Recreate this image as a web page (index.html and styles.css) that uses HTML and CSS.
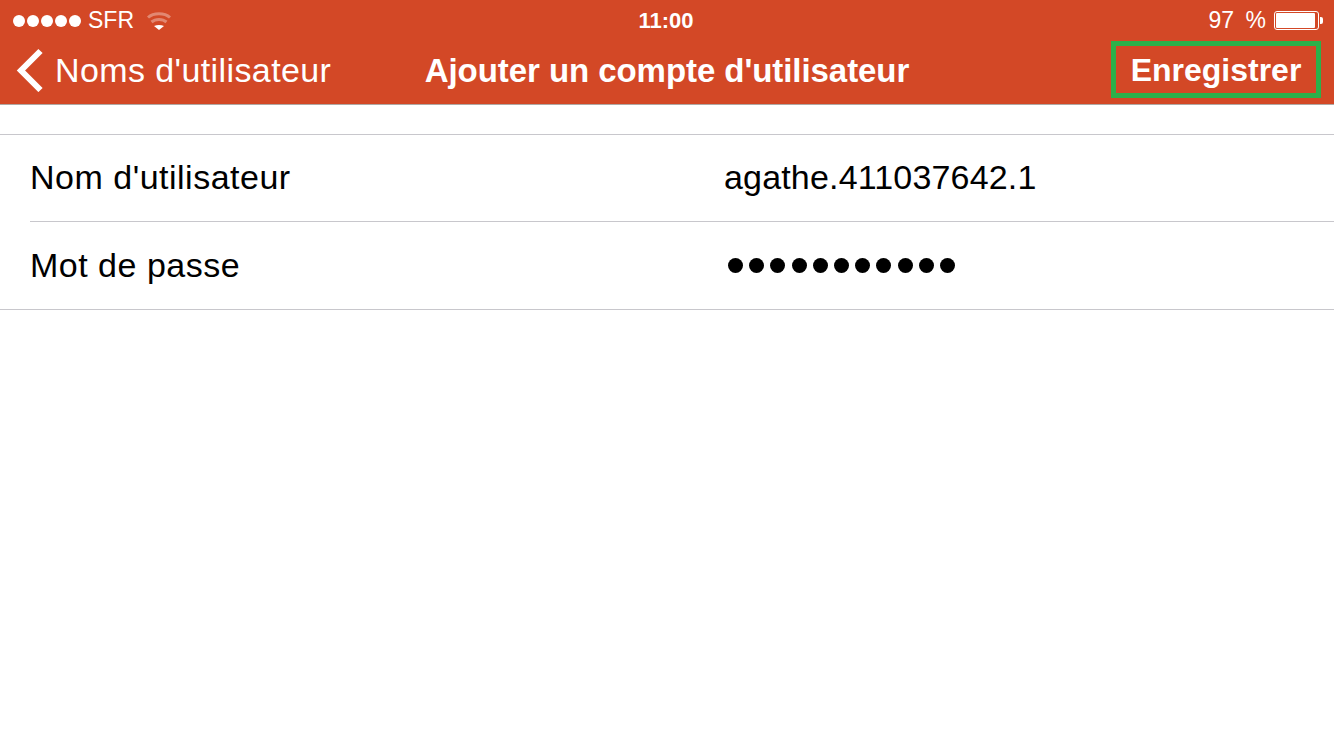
FILE: index.html
```html
<!DOCTYPE html>
<html lang="fr">
<head>
  <meta charset="UTF-8" />
  <title>Ajouter un compte d'utilisateur</title>
  <link rel="stylesheet" href="styles.css">
</head>
<body>
  <div id="header">
    <!-- Status bar -->
    <div class="status-bar">
      <div class="status-left">
        <div class="signal">
          <span class="dot"></span><span class="dot"></span><span class="dot"></span><span class="dot"></span><span class="dot"></span>
        </div>
        <span class="carrier">SFR</span>
        <svg class="wifi" width="24" height="18" viewBox="0 0 24 18">
          <path d="M1 5.500C6.500 0.500 17.500 0.500 23 5.500" fill="none" stroke="#fff" stroke-opacity="0.35" stroke-width="3"/>
          <path d="M4.500 10C8.500 6.500 15.500 6.500 19.500 10" fill="none" stroke="#fff" stroke-opacity="0.35" stroke-width="3"/>
          <path d="M7 14C10 12.500 14 12.500 17 14L12 18Z" fill="#fff"/>
        </svg>
      </div>
      <div class="clock">11:00</div>
      <div class="status-right">
        <span class="percent">97 %</span>
        <div class="battery"><div class="battery-level"></div></div>
        <div class="battery-tip"></div>
      </div>
    </div>

    <!-- Nav bar -->
    <div class="nav-bar">
      <div class="nav-back">
        <svg class="chevron" width="30" height="44" viewBox="0 0 30 44">
          <path d="M25.500 3L6 22.500L25.500 42" fill="none" stroke="#fff" stroke-width="6"/>
        </svg>
        <span>Noms d'utilisateur</span>
      </div>
      <div class="nav-title">Ajouter un compte d'utilisateur</div>
      <div class="nav-action"><span class="save-btn">Enregistrer</span></div>
    </div>
  </div>

  <div id="form">
    <div class="row">
      <div class="row-label">Nom d'utilisateur</div>
      <div class="row-value">agathe.411037642.1</div>
    </div>
    <div class="row">
      <div class="row-label">Mot de passe</div>
      <div class="row-value password">
        <span class="pw-dot"></span><span class="pw-dot"></span><span class="pw-dot"></span><span class="pw-dot"></span><span class="pw-dot"></span><span class="pw-dot"></span><span class="pw-dot"></span><span class="pw-dot"></span><span class="pw-dot"></span><span class="pw-dot"></span><span class="pw-dot"></span>
      </div>
    </div>
  </div>
</body>
</html>
```

FILE: styles.css
```css
body {
  margin: 0;
  height: 750px;
  background: #fff;
  font-family: 'Liberation Sans', Arial, sans-serif;
  color: #000;
  overflow: hidden;
}

#header {
  height: 104px;
  background: #d34826;
  border-bottom: 1px solid #b0a8a4;
  color: #fff;
}

.status-bar {
  height: 41px;
  display: grid;
  grid-template-columns: 1fr auto 1fr;
  align-items: center;
  padding: 0 11px 0 13px;
  font-size: 23px;
}

.status-left {
  display: flex;
  align-items: center;
}

.signal {
  display: flex;
  gap: 2px;
  margin-right: 7px;
}

.dot {
  width: 12px;
  height: 12px;
  border-radius: 50%;
  background: #fff;
}

.wifi {
  margin-left: 13px;
}

.clock {
  margin-left: -4px;
  font-weight: bold;
  font-size: 22px;
}

.status-right {
  display: flex;
  align-items: center;
  justify-content: flex-end;
}

.percent {
  margin-right: 8px;
  word-spacing: 5px;
}

.battery {
  width: 45px;
  height: 19px;
  border: 1px solid #fff;
  border-radius: 3px;
  padding: 1px;
  box-sizing: border-box;
}

.battery-level {
  width: 95%;
  height: 100%;
  background: #fff;
  border-radius: 1px;
}

.battery-tip {
  width: 3px;
  height: 7px;
  margin-left: 1px;
  background: #fff;
  border-radius: 0 2px 2px 0;
}

.nav-bar {
  height: 57px;
  display: grid;
  grid-template-columns: 1fr auto 1fr;
  align-items: center;
  padding: 0 13px 6px 15px;
}

.nav-back {
  display: flex;
  align-items: center;
  font-size: 34px;
  letter-spacing: 0.4px;
  gap: 10px;
}

.nav-back span {
  padding-top: 2px;
}

.nav-title {
  padding: 2px 2px 0 0;
  font-size: 33px;
  letter-spacing: -0.06px;
  font-weight: bold;
}

.nav-action {
  display: flex;
  justify-content: flex-end;
}

.save-btn {
  box-sizing: border-box;
  width: 210px;
  height: 57px;
  padding-top: 2px;
  border: 5px solid #2bb04a;
  display: flex;
  align-items: center;
  justify-content: center;
  font-size: 32px;
  font-weight: bold;
}

#form {
  margin-top: 29px;
  border-top: 1px solid #c8c7cc;
  border-bottom: 1px solid #c8c7cc;
}

.row {
  height: 84px;
  padding-bottom: 2px;
  display: flex;
  align-items: center;
  margin-left: 30px;
  font-size: 34px;
}

.row + .row {
  height: 87px;
  padding-bottom: 0;
  border-top: 1px solid #c8c7cc;
}

.row-label {
  width: 694px;
  letter-spacing: 0.5px;
}

.row-value {
  letter-spacing: 0.17px;
}

.password {
  display: flex;
  gap: 6.2px;
  padding-left: 4px;
}

.pw-dot {
  width: 15px;
  height: 15px;
  border-radius: 50%;
  background: #000;
}
```
